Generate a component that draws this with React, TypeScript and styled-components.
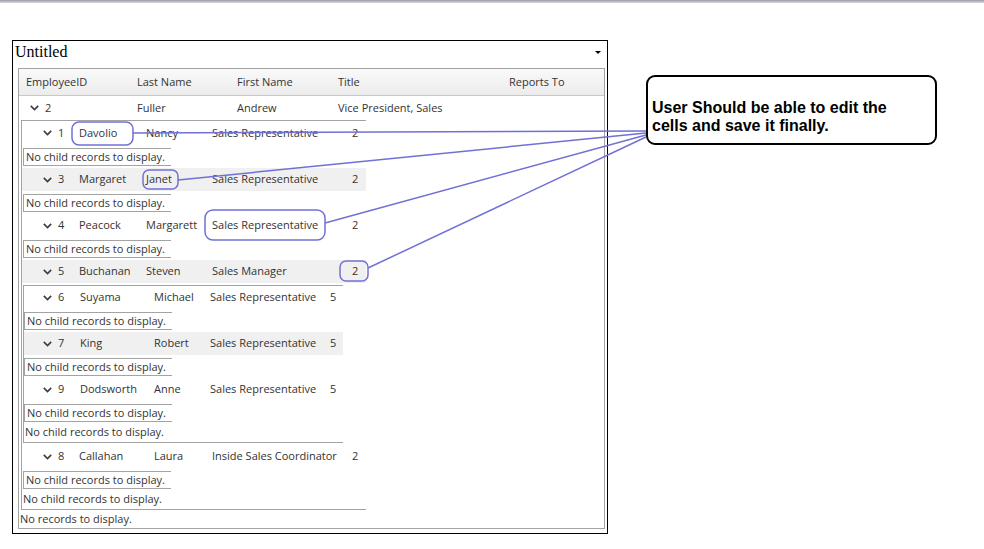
import React from 'react';
import styled, { createGlobalStyle } from 'styled-components';

const GlobalStyle = createGlobalStyle`
  body {
    margin: 0;
    background: #fff;
    font-family: 'Open Sans', 'Noto Sans', sans-serif;
  }
`;

const Screen = styled.div`
  position: relative;
  width: 984px;
  height: 549px;
  overflow: hidden;
`;

const TopBar = styled.div`
  height: 3px;
  background: linear-gradient(#9a9aa3, #dadae0);
`;

const Page = styled.div`
  padding: 37px 0 0 12px;
`;

const Window = styled.div`
  box-sizing: border-box;
  width: 596px;
  height: 494px;
  border: 1px solid #000;
  display: flex;
  flex-direction: column;
`;

const TitleBar = styled.div`
  box-sizing: border-box;
  height: 27px;
  display: flex;
  justify-content: space-between;
  padding: 1px 6px 0 2px;
  font: 16px 'Liberation Serif', serif;
  line-height: 20px;
  color: #000;
`;

const DropArrow = styled.span`
  width: 0;
  height: 0;
  margin-top: 9px;
  border-left: 3px solid transparent;
  border-right: 3px solid transparent;
  border-top: 3px solid #000;
`;

const Grid = styled.div`
  box-sizing: border-box;
  width: 587px;
  height: 461px;
  margin-left: 5px;
  border: 1px solid #a3a3a3;
  font-size: 11px;
  color: #333;
`;

const HeaderRow = styled.div<{ $cols: string }>`
  box-sizing: border-box;
  display: grid;
  grid-template-columns: ${p => p.$cols};
  height: 27px;
  align-items: center;
  background: linear-gradient(#f9f9f9, #ececec);
  border-bottom: 1px solid #c8c8c8;
`;

const HeaderCell = styled.div`
  padding: 0 0 2px 7px;
  white-space: nowrap;
`;

const Row = styled.div<{ $cols: string; $h?: number; $alt?: boolean }>`
  display: grid;
  grid-template-columns: ${p => p.$cols};
  height: ${p => p.$h ?? 23}px;
  align-items: center;
  background: ${p => (p.$alt ? '#f0f0f0' : 'transparent')};
`;

const Cell = styled.div<{ $pad?: number }>`
  padding: 0 0 2px ${p => p.$pad ?? 6}px;
  white-space: nowrap;
`;

const KeyCell = styled(Cell)`
  display: flex;
  align-items: center;
  gap: 6px;

  svg {
    margin-top: 2px;
  }
`;

const Detail = styled.div<{ $top?: number; $bottom?: number; $indent?: number }>`
  padding: ${p => p.$top ?? 0}px 0 ${p => p.$bottom ?? 0}px ${p => p.$indent ?? 0}px;
`;

const Nested = styled.div<{ $width: number }>`
  box-sizing: border-box;
  width: ${p => p.$width}px;
  border-left: 1px solid #a3a3a3;
  border-top: 1px solid #a3a3a3;
  border-bottom: 1px solid #a3a3a3;
`;

const EmptyBox = styled.div`
  box-sizing: border-box;
  width: 148px;
  height: 18px;
  line-height: 15px;
  padding-left: 2px;
  border: 1px solid #a3a3a3;
  border-right: none;
  white-space: nowrap;
`;

const Message = styled.div<{ $h?: number }>`
  height: ${p => p.$h ?? 18}px;
  line-height: ${p => (p.$h ?? 18) - 2}px;
  padding-left: 1px;
  white-space: nowrap;
`;

const Overlay = styled.svg`
  position: absolute;
  left: 0;
  top: 0;
  pointer-events: none;
`;

const Callout = styled.div`
  position: absolute;
  left: 646px;
  top: 75px;
  box-sizing: border-box;
  width: 291px;
  height: 70px;
  padding: 22px 0 0 4px;
  border: 2px solid #000;
  border-radius: 9px;
  background: #fff;
  font: bold 16px 'Liberation Sans', Arial, sans-serif;
  line-height: 18px;
  color: #000;
`;

const MAIN_COLS = '111px 100px 101px 171px 1fr';
const L1_COLS = '51px 67px 66px 140px 20px';
const L1_COLS_WIDE = '51px 75px 58px 140px 20px';
const L2_COLS = '50px 74px 56px 120px 19px';

type Employee = {
  id: number;
  last: string;
  first: string;
  title: string;
  reports?: number;
  alt?: boolean;
};

const Chevron = () => (
  <svg width="9" height="6" viewBox="0 0 9 6">
    <polyline points="0.8,0.9 4.5,4.6 8.2,0.9" fill="none" stroke="#3c3c3c" strokeWidth="1.6" />
  </svg>
);

const EmployeeRow = ({ e, cols, lead, h }: { e: Employee; cols: string; lead: number; h?: number }) => (
  <Row $cols={cols} $h={h} $alt={e.alt}>
    <KeyCell $pad={lead}>
      <Chevron />
      {e.id}
    </KeyCell>
    <Cell>{e.last}</Cell>
    <Cell>{e.first}</Cell>
    <Cell>{e.title}</Cell>
    <Cell>{e.reports ?? ''}</Cell>
  </Row>
);

const NoChildren = ({ indent = 1, top = 3, bottom = 2 }: { indent?: number; top?: number; bottom?: number }) => (
  <Detail $indent={indent} $top={top} $bottom={bottom}>
    <EmptyBox>No child records to display.</EmptyBox>
  </Detail>
);

const fuller: Employee = { id: 2, last: 'Fuller', first: 'Andrew', title: 'Vice President, Sales' };

const salesTeam: Employee[] = [
  { id: 1, last: 'Davolio', first: 'Nancy', title: 'Sales Representative', reports: 2 },
  { id: 3, last: 'Margaret', first: 'Janet', title: 'Sales Representative', reports: 2, alt: true },
  { id: 4, last: 'Peacock', first: 'Margarett', title: 'Sales Representative', reports: 2 },
];

const buchanan: Employee = { id: 5, last: 'Buchanan', first: 'Steven', title: 'Sales Manager', reports: 2, alt: true };

const buchananTeam: Employee[] = [
  { id: 6, last: 'Suyama', first: 'Michael', title: 'Sales Representative', reports: 5 },
  { id: 7, last: 'King', first: 'Robert', title: 'Sales Representative', reports: 5, alt: true },
  { id: 9, last: 'Dodsworth', first: 'Anne', title: 'Sales Representative', reports: 5 },
];

const callahan: Employee = { id: 8, last: 'Callahan', first: 'Laura', title: 'Inside Sales Coordinator', reports: 2 };

const MARK = '#7070d6';

const Annotations = () => (
  <Overlay width="984" height="549" viewBox="0 0 984 549">
    <g fill="none" stroke={MARK} strokeWidth="1.5">
      <rect x="72" y="122" width="61" height="23" rx="7" />
      <rect x="143" y="170" width="35" height="19" rx="6" />
      <rect x="205" y="210" width="120" height="30" rx="8" />
      <rect x="340" y="261" width="28" height="20" rx="6" />
      <line x1="133" y1="133" x2="646" y2="131" />
      <line x1="178" y1="180" x2="646" y2="133" />
      <line x1="325" y1="223" x2="646" y2="135" />
      <line x1="368" y1="268" x2="646" y2="137" />
    </g>
  </Overlay>
);

export default function App() {
  return (
    <Screen>
      <GlobalStyle />
      <TopBar />
      <Page>
        <Window>
          <TitleBar>
            <span>Untitled</span>
            <DropArrow />
          </TitleBar>
          <Grid>
            <HeaderRow $cols={MAIN_COLS}>
              <HeaderCell>EmployeeID</HeaderCell>
              <HeaderCell>Last Name</HeaderCell>
              <HeaderCell>First Name</HeaderCell>
              <HeaderCell>Title</HeaderCell>
              <HeaderCell>Reports To</HeaderCell>
            </HeaderRow>

            <Row $cols={MAIN_COLS} $h={24}>
              <KeyCell $pad={11}>
                <Chevron />
                {fuller.id}
              </KeyCell>
              <Cell $pad={7}>{fuller.last}</Cell>
              <Cell $pad={7}>{fuller.first}</Cell>
              <Cell $pad={7}>{fuller.title}</Cell>
              <Cell $pad={7} />
            </Row>

            <Detail $indent={2}>
              <Nested $width={345}>
                {salesTeam.map((e, i) => (
                  <React.Fragment key={e.id}>
                    <EmployeeRow e={e} cols={L1_COLS} lead={21} h={i === 0 ? 24 : 23} />
                    <NoChildren />
                  </React.Fragment>
                ))}

                <EmployeeRow e={buchanan} cols={L1_COLS} lead={21} />
                <Detail $indent={1} $top={2} $bottom={2}>
                  <Nested $width={320}>
                    {buchananTeam.map(e => (
                      <React.Fragment key={e.id}>
                        <EmployeeRow e={e} cols={L2_COLS} lead={19} />
                        <NoChildren indent={0} />
                      </React.Fragment>
                    ))}
                    <Message>No child records to display.</Message>
                  </Nested>
                </Detail>

                <EmployeeRow e={callahan} cols={L1_COLS_WIDE} lead={21} />
                <NoChildren />
                <Message>No child records to display.</Message>
              </Nested>
            </Detail>

            <Message $h={20}>No records to display.</Message>
          </Grid>
        </Window>
      </Page>
      <Annotations />
      <Callout>
        User Should be able to edit the
        <br />
        cells and save it finally.
      </Callout>
    </Screen>
  );
}
